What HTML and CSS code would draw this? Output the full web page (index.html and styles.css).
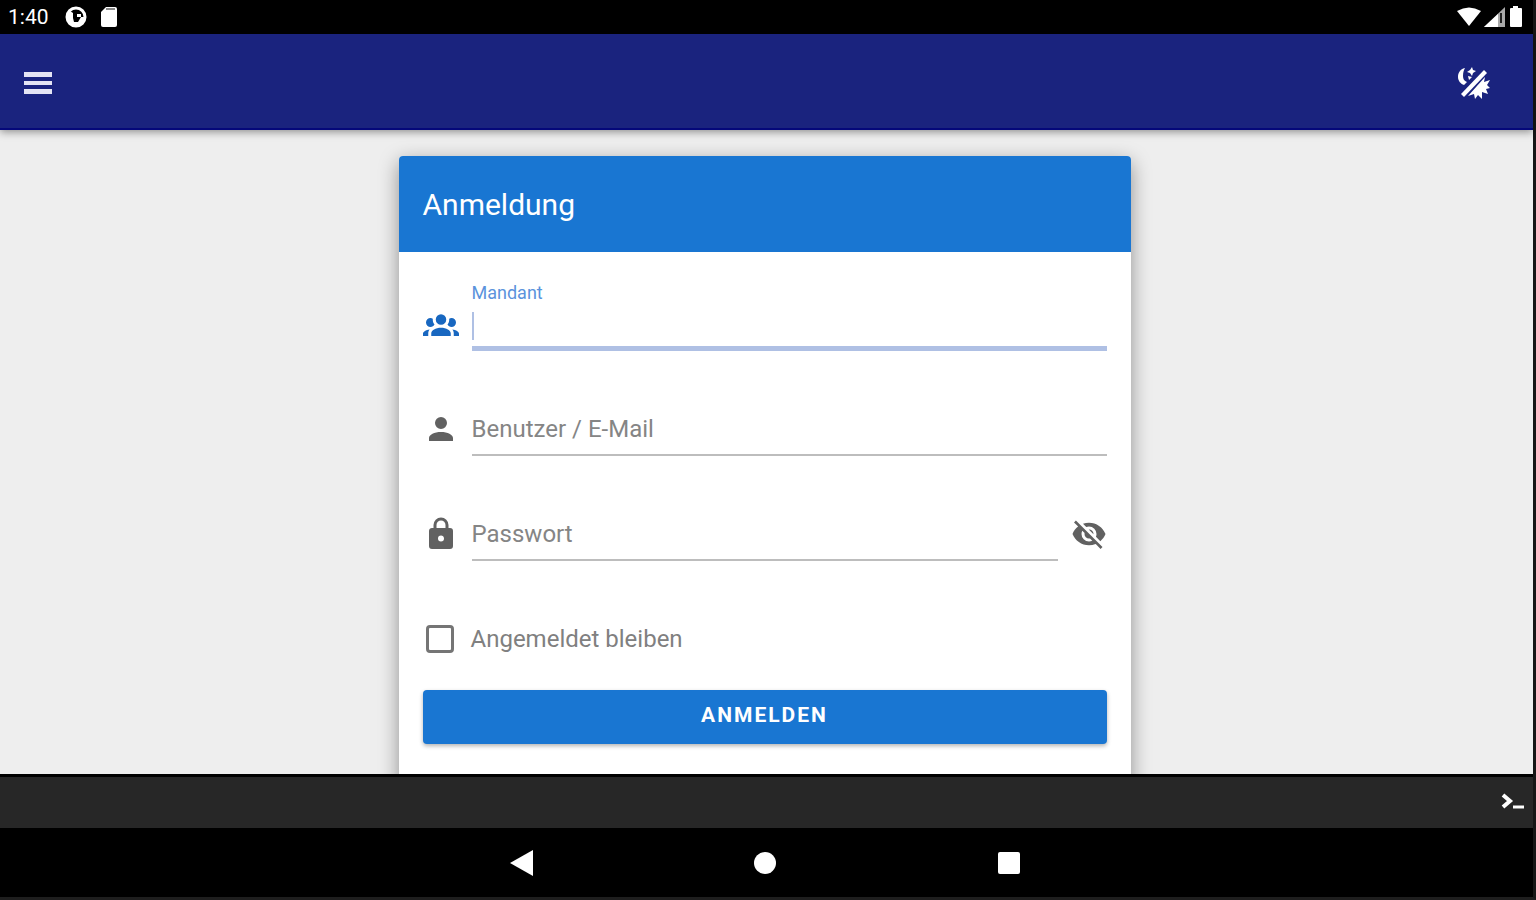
FILE: index.html
```
<!DOCTYPE html>
<html lang="de">
<head>
    <meta charset="UTF-8">
    <meta name="viewport" content="width=device-width, initial-scale=1.0">
    <title>Anmeldung</title>
    <link rel="stylesheet" href="styles.css">
</head>
<body>
    <div class="screen">
        <div class="statusbar">
            <span class="time">1:40</span>
            <svg class="status-icon" viewBox="0 0 22 22">
                <circle cx="11" cy="11" r="9" fill="none" stroke="#fff" stroke-width="3"/>
                <path d="M2 11a9 9 0 0 0 18 0h-4l-3 5H9l-1-4V7L5 5z" fill="#fff"/>
                <path d="M12 8h4v3h-4z" fill="#fff"/>
            </svg>
            <svg class="status-icon sd" viewBox="0 0 22 22">
                <path d="M8 1h9q2 0 2 2v16q0 2-2 2H5q-2 0-2-2V6z" fill="#fff"/>
                <path d="M8 3h9" stroke="#888" stroke-width="2"/>
            </svg>
            <div class="status-right">
                <svg width="24" height="20" viewBox="0 0 24 20"><path d="M0 4q12-7 24 0L12 19z" fill="#fff"/></svg>
                <svg width="22" height="20" viewBox="0 0 22 20"><path d="M21 0v20H0z" fill="#aaa"/><path d="M14 7v13H0z" fill="#fff"/><path d="M17 6v10" stroke="#222" stroke-width="2"/></svg>
                <svg width="14" height="22" viewBox="0 0 14 22"><path d="M4 0h5v2h3q1 0 1 1v17q0 1-1 1H2q-1 0-1-1V3q0-1 1-1h2z" fill="#fff"/></svg>
            </div>
        </div>

        <header class="appbar">
            <button type="button" class="icon-btn" aria-label="Menü">
                <svg width="28" height="24" viewBox="0 0 28 24"><path d="M0 1h28v5H0zM0 10h28v4H0zM0 18h28v5H0z" fill="#e4e4f4"/></svg>
            </button>
            <button type="button" class="icon-btn" aria-label="Design wechseln">
                <svg width="34" height="34" viewBox="0 0 34 34" fill="#fff">
                    <path d="M8 2C3 3 1 7 1 11c0 4 3 7 6 8l3-3c-3-1-4-3-4-6 0-4 1-6 2-8z"/>
                    <path d="M15 1l1 3 3 1-3 2-1 3-2-3-3-1 3-2zM11 10l4 1-3 3z"/>
                    <path d="M27 4l3 3L7 31l-3-3z"/>
                    <path d="M28 11l-1 5 6-2-3 5 3 3-4 1 2 5-6-2v7l-4-4-3 4-1-5-6 2z"/>
                </svg>
            </button>
        </header>

        <main class="content">
            <section class="card">
                <h1 class="card-title">Anmeldung</h1>
                <form class="login-form">
                    <div class="field active">
                        <svg class="icon" viewBox="0 0 24 24"><path d="M12,5.5A3.5,3.5 0 0,1 15.5,9A3.5,3.5 0 0,1 12,12.5A3.5,3.5 0 0,1 8.5,9A3.5,3.5 0 0,1 12,5.5M5,8C5.56,8 6.08,8.15 6.53,8.42C6.38,9.85 6.8,11.27 7.66,12.38C7.16,13.34 6.16,14 5,14A3,3 0 0,1 2,11A3,3 0 0,1 5,8M19,8A3,3 0 0,1 22,11A3,3 0 0,1 19,14C17.84,14 16.84,13.34 16.34,12.38C17.2,11.27 17.62,9.85 17.47,8.42C17.92,8.15 18.44,8 19,8M5.5,18.25C5.5,16.18 8.41,14.5 12,14.5C15.59,14.5 18.5,16.18 18.5,18.25V20H5.5V18.25M0,20V18.5C0,17.11 1.89,15.94 4.45,15.6C3.86,16.28 3.5,17.22 3.5,18.25V20H0M24,20H20.5V18.25C20.5,17.22 20.14,16.28 19.55,15.6C22.11,15.94 24,17.11 24,18.5V20Z"/></svg>
                        <div class="control">
                            <label for="mandant">Mandant</label>
                            <input type="text" id="mandant">
                            <span class="caret"></span>
                        </div>
                    </div>

                    <div class="field">
                        <svg class="icon" viewBox="0 0 24 24"><path d="M12,4A4,4 0 0,1 16,8A4,4 0 0,1 12,12A4,4 0 0,1 8,8A4,4 0 0,1 12,4M12,14C16.42,14 20,15.79 20,18V20H4V18C4,15.79 7.58,14 12,14Z"/></svg>
                        <div class="control">
                            <input type="text" id="benutzer" placeholder="Benutzer / E-Mail" aria-label="Benutzer / E-Mail">
                        </div>
                    </div>

                    <div class="field">
                        <svg class="icon" viewBox="0 0 24 24"><path d="M12,17A2,2 0 0,0 14,15C14,13.89 13.1,13 12,13A2,2 0 0,0 10,15A2,2 0 0,0 12,17M18,8A2,2 0 0,1 20,10V20A2,2 0 0,1 18,22H6A2,2 0 0,1 4,20V10C4,8.89 4.9,8 6,8H7V6A5,5 0 0,1 12,1A5,5 0 0,1 17,6V8H18M12,3A3,3 0 0,0 9,6V8H15V6A3,3 0 0,0 12,3Z"/></svg>
                        <div class="control">
                            <input type="password" id="passwort" placeholder="Passwort" aria-label="Passwort">
                        </div>
                        <button type="button" class="icon-btn" aria-label="Passwort anzeigen">
                            <svg class="icon" viewBox="0 0 24 24"><path d="M11.83,9L15,12.16C15,12.11 15,12.05 15,12A3,3 0 0,0 12,9C11.94,9 11.89,9 11.83,9M7.53,9.8L9.08,11.35C9.03,11.56 9,11.77 9,12A3,3 0 0,0 12,15C12.22,15 12.44,14.97 12.65,14.92L14.2,16.47C13.53,16.8 12.79,17 12,17A5,5 0 0,1 7,12C7,11.21 7.2,10.47 7.53,9.8M2,4.27L4.28,6.55L4.73,7C3.08,8.3 1.78,10 1,12C2.73,16.39 7,19.5 12,19.5C13.55,19.5 15.03,19.2 16.38,18.66L16.81,19.08L19.73,22L21,20.73L3.27,3M12,7A5,5 0 0,1 17,12C17,12.64 16.87,13.26 16.64,13.82L19.57,16.75C21.07,15.5 22.27,13.86 23,12C21.27,7.61 17,4.5 12,4.5C10.6,4.5 9.26,4.75 8,5.2L10.17,7.35C10.74,7.13 11.35,7 12,7Z"/></svg>
                        </button>
                    </div>

                    <div class="remember">
                        <input type="checkbox" id="bleiben">
                        <label for="bleiben">Angemeldet bleiben</label>
                    </div>

                    <button type="submit" class="submit-btn">ANMELDEN</button>
                </form>
            </section>
        </main>

        <div class="console">
            <button type="button" class="icon-btn" aria-label="Konsole">
                <svg width="26" height="20" viewBox="0 0 26 20" fill="none" stroke="#fff" stroke-width="4"><path d="M4 2l7 6-7 6"/><path d="M14 14h11" stroke-width="3"/></svg>
            </button>
        </div>

        <nav class="navbar">
            <button type="button" class="icon-btn" aria-label="Zurück">
                <svg width="24" height="28" viewBox="0 0 24 28"><path d="M24 1v26L1 14z" fill="#fff"/></svg>
            </button>
            <button type="button" class="icon-btn" aria-label="Startseite">
                <svg width="24" height="24" viewBox="0 0 24 24"><circle cx="12" cy="12" r="11" fill="#fff"/></svg>
            </button>
            <button type="button" class="icon-btn" aria-label="Übersicht">
                <svg width="24" height="24" viewBox="0 0 24 24"><rect x="1" y="1" width="22" height="22" rx="2" fill="#fff"/></svg>
            </button>
        </nav>
    </div>
</body>
</html>
```
FILE: styles.css
```
* {
    box-sizing: border-box;
}
body {
    font-family: Roboto, "Liberation Sans", sans-serif;
    margin: 0;
    background-color: #000;
}
svg {
    display: block;
}
.screen {
    display: flex;
    flex-direction: column;
    height: 100vh;
    border-right: 3px solid #161616;
    border-bottom: 3px solid #1e1e1e;
}
.statusbar {
    display: flex;
    align-items: center;
    height: 34px;
    padding: 0 10px 0 8px;
    background-color: #000;
    color: #fff;
}
.time {
    font-size: 21px;
    margin-right: 16px;
}
.status-icon {
    width: 22px;
    height: 22px;
}
.sd {
    margin-left: 11px;
}
.status-right {
    display: flex;
    align-items: center;
    gap: 3px;
    margin-left: auto;
}
.icon-btn {
    padding: 0;
    border: none;
    background: none;
    cursor: pointer;
}
.appbar {
    display: flex;
    align-items: center;
    justify-content: space-between;
    height: 96px;
    padding: 2px 42px 0 24px;
    background-color: #1a237e;
    box-shadow: inset 0 -2px 0 #05087a, 0 2px 8px rgba(0, 0, 0, 0.4);
    z-index: 1;
}
.content {
    flex: 1;
    min-height: 0;
    overflow: hidden;
    padding: 26px 24px 0 20px;
    background-color: #eee;
}
.card {
    max-width: 732px;
    margin: 0 auto;
    background-color: #fff;
    border-radius: 4px;
    box-shadow: 0 6px 20px rgba(0, 0, 0, 0.4);
}
.card-title {
    margin: 0;
    padding: 0 24px;
    font-size: 30px;
    font-weight: 400;
    line-height: 98px;
    height: 96px;
    color: #fff;
    background-color: #1976d2;
    border-radius: 4px 4px 0 0;
}
.login-form {
    padding: 24px 24px 48px;
}
.field {
    display: flex;
    align-items: flex-end;
    gap: 13px;
    height: 75px;
    margin-bottom: 30px;
}
.icon {
    width: 36px;
    height: 36px;
    margin-bottom: 9px;
    fill: #616161;
}
.active .icon {
    fill: #1867c0;
}
.control {
    position: relative;
    display: flex;
    flex-direction: column;
    flex: 1;
}
.control label {
    font-size: 18px;
    line-height: 34px;
    color: #5b93dc;
}
.control input {
    width: 100%;
    height: 54px;
    padding: 2px 0 0;
    border: none;
    border-bottom: 2px solid #bdbdbd;
    outline: none;
    background: none;
    font-family: inherit;
    font-size: 24px;
}
.control input::placeholder {
    color: #858585;
    opacity: 1;
}
.active .control input {
    height: 41px;
    border-bottom: 5px solid #afc0e4;
}
.caret {
    position: absolute;
    left: 0;
    bottom: 11px;
    width: 2px;
    height: 28px;
    background-color: #afc0e4;
}
.remember {
    display: flex;
    align-items: center;
    height: 54px;
    margin: 51px 0 24px;
    font-size: 24px;
    color: #808080;
}
.remember input {
    appearance: none;
    width: 28px;
    height: 28px;
    margin: 0 17px 0 3px;
    border: 3px solid #757575;
    border-radius: 4px;
}
.remember input:checked {
    background-color: #1976d2;
}
.submit-btn {
    width: 100%;
    height: 54px;
    padding: 0 0 4px;
    border: none;
    border-radius: 4px;
    background-color: #1976d2;
    color: #fff;
    font-family: inherit;
    font-size: 21px;
    font-weight: 700;
    letter-spacing: 2px;
    box-shadow: 0 2px 4px rgba(0, 0, 0, 0.3);
    cursor: pointer;
}
.console {
    display: flex;
    align-items: center;
    justify-content: flex-end;
    height: 54px;
    padding-right: 8px;
    border-top: 3px solid #000;
    background-color: #272727;
    z-index: 1;
}
.navbar {
    display: flex;
    align-items: center;
    justify-content: center;
    gap: 220px;
    height: 69px;
    padding-right: 4px;
    background-color: #000;
}
```
